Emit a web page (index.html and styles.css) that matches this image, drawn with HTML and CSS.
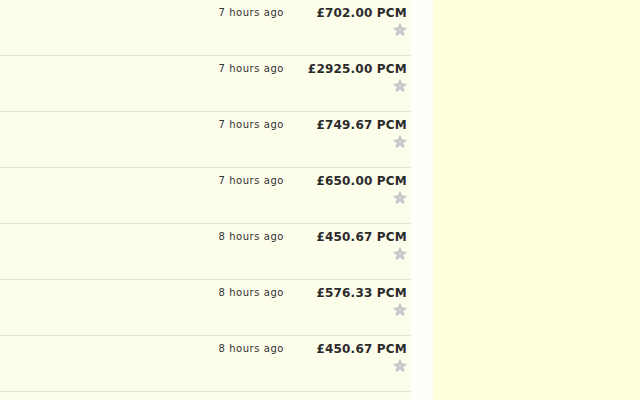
FILE: index.html
```html
<!DOCTYPE html>
<html>
<head>
<meta charset="utf-8">
<link rel="stylesheet" href="styles.css">
</head>
<body>
<div class="page">
  <div class="list">
    <div class="row"><div class="time">7 hours ago</div><div class="price-col"><div class="price">£702.00 PCM</div><svg class="star" viewBox="0 0 14 14"><path d="M7 0.8 L8.8 4.8 L13.2 5.2 L9.9 8.1 L10.9 12.5 L7 10.2 L3.1 12.5 L4.1 8.1 L0.8 5.2 L5.2 4.8 Z"/></svg></div></div>
    <div class="row"><div class="time">7 hours ago</div><div class="price-col"><div class="price">£2925.00 PCM</div><svg class="star" viewBox="0 0 14 14"><path d="M7 0.8 L8.8 4.8 L13.2 5.2 L9.9 8.1 L10.9 12.5 L7 10.2 L3.1 12.5 L4.1 8.1 L0.8 5.2 L5.2 4.8 Z"/></svg></div></div>
    <div class="row"><div class="time">7 hours ago</div><div class="price-col"><div class="price">£749.67 PCM</div><svg class="star" viewBox="0 0 14 14"><path d="M7 0.8 L8.8 4.8 L13.2 5.2 L9.9 8.1 L10.9 12.5 L7 10.2 L3.1 12.5 L4.1 8.1 L0.8 5.2 L5.2 4.8 Z"/></svg></div></div>
    <div class="row"><div class="time">7 hours ago</div><div class="price-col"><div class="price">£650.00 PCM</div><svg class="star" viewBox="0 0 14 14"><path d="M7 0.8 L8.8 4.8 L13.2 5.2 L9.9 8.1 L10.9 12.5 L7 10.2 L3.1 12.5 L4.1 8.1 L0.8 5.2 L5.2 4.8 Z"/></svg></div></div>
    <div class="row"><div class="time">8 hours ago</div><div class="price-col"><div class="price">£450.67 PCM</div><svg class="star" viewBox="0 0 14 14"><path d="M7 0.8 L8.8 4.8 L13.2 5.2 L9.9 8.1 L10.9 12.5 L7 10.2 L3.1 12.5 L4.1 8.1 L0.8 5.2 L5.2 4.8 Z"/></svg></div></div>
    <div class="row"><div class="time">8 hours ago</div><div class="price-col"><div class="price">£576.33 PCM</div><svg class="star" viewBox="0 0 14 14"><path d="M7 0.8 L8.8 4.8 L13.2 5.2 L9.9 8.1 L10.9 12.5 L7 10.2 L3.1 12.5 L4.1 8.1 L0.8 5.2 L5.2 4.8 Z"/></svg></div></div>
    <div class="row"><div class="time">8 hours ago</div><div class="price-col"><div class="price">£450.67 PCM</div><svg class="star" viewBox="0 0 14 14"><path d="M7 0.8 L8.8 4.8 L13.2 5.2 L9.9 8.1 L10.9 12.5 L7 10.2 L3.1 12.5 L4.1 8.1 L0.8 5.2 L5.2 4.8 Z"/></svg></div></div>
  </div>
  <div class="side"></div>
</div>
</body>
</html>
```
FILE: styles.css
```css
html, body {
  margin: 0;
  padding: 0;
  height: 100%;
  overflow: hidden;
  background: #fffffa;
}
.page {
  display: flex;
  gap: 22px;
  height: 400px;
  font-family: "DejaVu Sans", Verdana, sans-serif;
  color: #333;
}
.list {
  width: 411px;
  background: #fdfdec;
  display: flex;
  flex-direction: column;
}
.row {
  height: 55px;
  flex: none;
  border-bottom: 1px solid #e4e4d4;
  display: flex;
  justify-content: flex-end;
}
.time {
  font-size: 10px;
  line-height: 12px;
  letter-spacing: 0.55px;
  padding-top: 7px;
  margin-right: 5px;
  color: #333;
}
.price-col {
  width: 118px;
  padding-right: 4px;
  display: flex;
  flex-direction: column;
  align-items: flex-end;
}
.price {
  font-size: 12px;
  font-weight: bold;
  line-height: 14px;
  letter-spacing: 0.2px;
  padding-top: 6px;
  color: #2b2b2b;
}
.star {
  width: 14px;
  height: 14px;
  margin-top: 3px;
  fill: #cccccc;
  stroke: #bdbdbd;
  stroke-width: 0.8;
}
.side {
  flex: 1;
  background: #ffffdc;
}
```
